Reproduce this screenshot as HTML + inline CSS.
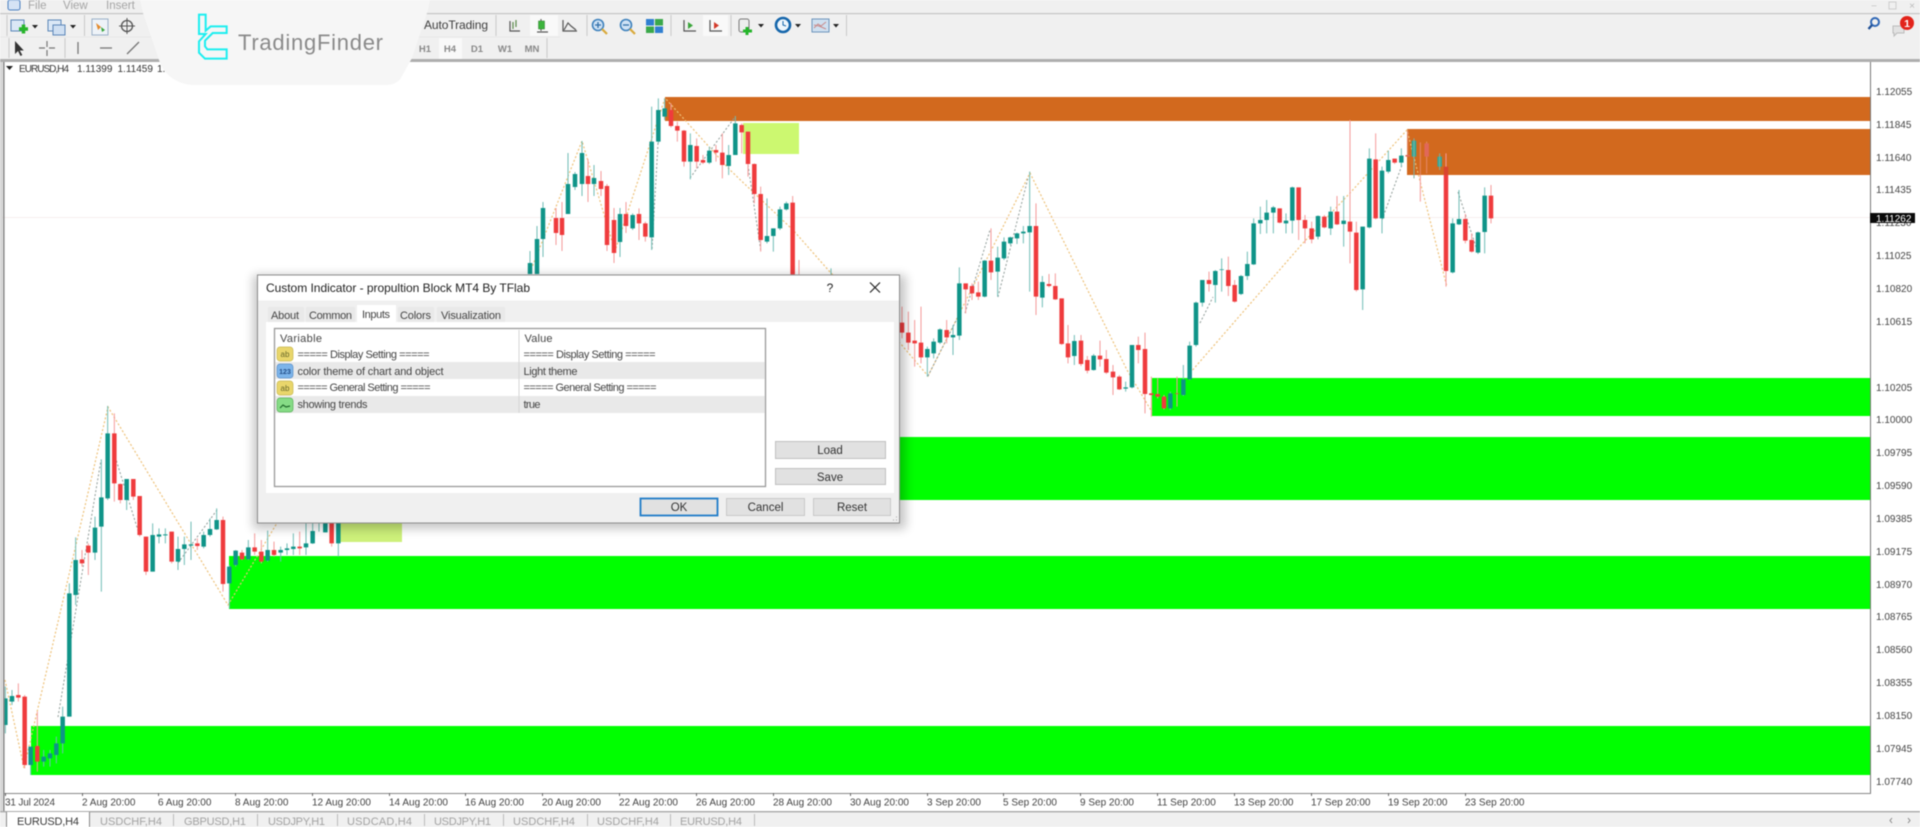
<!DOCTYPE html>
<html><head><meta charset="utf-8"><title>EURUSD,H4</title>
<style>
html,body{margin:0;padding:0;width:1920px;height:827px;overflow:hidden;background:#fff}
svg{display:block;filter:blur(.6px);font-family:"Liberation Sans",sans-serif}
.tw{stroke:#6fbdb5;stroke-width:3;fill:none}.rw{stroke:#f59a9a;stroke-width:3;fill:none}
.tb{stroke:#0f9488;stroke-width:13.5;fill:none}.rb{stroke:#ef3b3d;stroke-width:13.5;fill:none}
.ax{font-size:10px;fill:#444}.tab{font-size:11px;fill:#a2a2a2}.dt{font-size:11px;fill:#3a3a3a}
.bt{font-size:11.5px;fill:#333;text-anchor:middle}.tf{font-size:9.5px;fill:#888;font-weight:bold;text-anchor:middle}
</style></head><body>
<svg width="1920" height="827" viewBox="0 0 1920 827" xmlns="http://www.w3.org/2000/svg">
<defs><filter id="sh" x="-10%" y="-10%" width="120%" height="120%"><feGaussianBlur stdDeviation="5"/></filter></defs>
<rect width="1920" height="827" fill="#fff"/>
<rect x="0" y="217" width="1870" height="1" fill="#f6eeee"/>

<!-- zones -->
<rect x="665" y="97" width="1205" height="24" fill="#d2691e"/>
<rect x="1407" y="129" width="463" height="46" fill="#d2691e"/>
<rect x="743" y="123" width="56" height="31" fill="#ccf870"/>
<rect x="340" y="520" width="62" height="22" fill="#cdf07a"/>
<rect x="31" y="726" width="1839" height="49" fill="#00ff00"/>
<rect x="229" y="556" width="1641" height="53" fill="#00ff00"/>
<rect x="800" y="437" width="1070" height="63" fill="#00ff00"/>
<rect x="1152" y="378" width="718" height="38" fill="#00ff00"/>

<!-- zigzag tan -->
<path fill="none" stroke="#eec27a" stroke-width="1.200" stroke-dasharray="2 2" d="M5 680L24 768L108 407L228 605L277 523L525 285L582 141L615 251L665 98L730 170L793 230L830 272L900 343L928 376L1030 173L1127 370L1152 412M1190 373L1303 243L1350 193L1407 130L1447 287"/>
<path fill="none" stroke="#8f9c98" stroke-width="1" stroke-dasharray="2 2" d="M58 717L101 460M114 453L140 537M178 563L217 510M690 178L735 117M748 165L761 252M658 143L652 250M928 376L960 313M965 313L990 230M998 297L1028 178M1200 323L1213 297M1382 220L1402 165M1458 192L1478 253"/>

<!-- candles group A -->
<g transform="translate(0 400) scale(.33333)">
<path class="tw" d="M16 860V1000M36 870V915M92 1040V1125M131 1050V1100M150 1050V1100M169 1010V1090M188 920V1060M208 550V950M227 412V615M285 350V480M304 178V575M323 18V300M380 237V330M458 370V515M477 385V430M496 385V430M534 410V510M553 410V495M573 365V480M611 395V445M630 355V410M650 325V390M688 495V625M707 450V500M745 420V480M803 392V485M842 440V485M861 430V465M880 400V465M918 370V465M938 370V432M957 370V395M976 370V397M1015 370V470"/>
<path class="rw" d="M55 850V905M74 885V1105M112 935V1115M246 450V500M265 430V525M343 40V305M361 250V310M400 237V300M419 288V410M438 410V525M515 395V490M592 415V450M669 350V575M726 450V480M764 400V465M784 420V490M822 425V470M899 395V465M995 370V440"/>
<path class="tb" d="M16 895V975M36 888V905M92 1040V1095M131 1070V1085M150 1060V1075M169 1030V1065M188 950V1030M208 580V950M227 480V585M285 383V458M304 292V380M323 100V295M380 237V300M458 405V515M477 403V410M496 403V406M534 447V485M553 433V447M573 433V437M611 405V440M630 387V405M650 360V388M688 500V550M707 452V495M745 442V478M803 450V482M842 450V458M861 445V450M880 440V447M918 430V442M938 393V430M976 370V397M1015 370V430"/>
<path class="rb" d="M55 885V893M74 890V1095M112 1038V1085M246 478V490M265 437V458M343 100V250M361 252V300M400 237V290M419 288V405M438 410V515M515 395V485M592 430V438M669 360V552M726 458V478M764 442V455M784 455V485M822 450V465M899 440V445M995 370V430"/>
</g>
<!-- candles group B (left of zoom 8, above dialog) -->
<g>
<path fill="none" stroke="#6fbdb5" stroke-width="1" d="M620 208V257M530 251V274M537 226V274M543 202V257M568 153V213M575 172V190M582 141V196M594 165V196"/>
<path fill="none" stroke="#f59a9a" stroke-width="1" d="M626 202V233M614 208V263M607 184V251M601 171V196M588 159V202M562 202V251M556 208V245"/>
<path fill="none" stroke="#0f9488" stroke-width="4.500" d="M620 214V242M582 153V184M575 174V187M568 184V214M594 178V184M543 208V239M537 239V274M530 263V274"/>
<path fill="none" stroke="#ef3b3d" stroke-width="4.500" d="M626 214V226M614 220V253M607 186V245M601 181V189M588 176V184M562 218V235M556 218V233"/>
</g>
<!-- candles group C -->
<g transform="translate(630 90) scale(.33333)">
<path class="tw" d="M8 370V420M65 50V480M85 25V160M104 25V90M181 130V268M238 170V222M296 165V255M316 78V195M411 325V460M430 415V485M450 350V420M469 335V362M603 535V553"/>
<path class="rw" d="M27 355V450M46 395V455M123 40V112M142 95V155M162 120V230M200 145V235M219 195V222M258 165V215M277 130V265M335 100V190M354 125V260M373 220V340M392 290V485M488 318V553M507 510V553"/>
<path class="tb" d="M8 375V415M65 155V442M85 60V155M104 55V80M181 165V215M238 182V218M296 195V228M316 100V195M411 438V455M430 415V438M450 358V415M469 340V358"/>
<path class="rb" d="M27 372V400M46 400V440M123 60V108M142 108V122M162 122V215M200 168V215M219 210V218M258 180V188M277 188V225M335 105V127M354 125V222M373 222V312M392 312V450M488 338V553"/>
</g>
<!-- candles group D -->
<g transform="translate(900 150) scale(.33333)">
<path class="tw" d="M82 590V680M101 565V625M120 535V582M159 525V615M178 352V570M254 330V442M293 290V440M312 262V330M331 260V285M351 248V282M370 228V280M389 65V425M427 378V472M523 555V645M581 612V662M677 695V725M696 585V715M811 725V780M850 645V738M869 575V690M888 455V590"/>
<path class="rw" d="M6 470V565M25 485V600M44 510V650M63 470V640M140 510V580M197 400V490M216 400V450M235 395V450M273 235V390M408 160V495M447 372V412M466 370V450M485 445V585M504 525V640M543 555V648M562 618V670M600 572V650M619 600V672M639 645V735M658 675V720M715 560V640M735 548V790M754 680V800M773 685V745M792 735V778M831 680V770"/>
<path class="tb" d="M82 597V622M101 575V610M120 538V578M159 555V562M178 400V557M254 332V440M293 323V365M312 275V325M331 262V280M351 250V265M370 245V250M389 228V247M427 396V443M523 573V618M581 617V660M677 712V716M696 585V712M811 730V775M850 688V735M869 587V688M888 458V585"/>
<path class="rb" d="M6 518V548M25 548V578M44 572V580M63 578V622M140 540V562M197 400V418M216 408V430M235 427V440M273 332V367M408 228V440M447 402V408M466 408V448M485 445V582M504 580V622M543 572V642M562 630V662M600 617V628M619 627V668M639 665V682M658 680V718M715 585V600M735 597V732M754 730V735M773 732V740M792 740V775M831 730V732"/>
</g>
<!-- candles group E -->
<g transform="translate(1180 110) scale(.33333)">
<path class="tw" d="M67 510V590M106 480V578M125 445V545M183 495V555M202 425V510M221 325V465M241 290V372M260 270V370M280 288V370M318 310V370M337 230V370M414 316V388M452 290V375M491 258V410M548 350V600M568 115V355M606 170V370M625 122V190M664 115V170M818 325V490M837 240V345M894 365V432M914 232V430"/>
<path class="rw" d="M87 485V545M145 440V558M164 510V578M299 295V340M356 232V390M375 315V400M395 335V400M433 315V355M471 258V345M510 30V460M529 335V545M587 70V328M644 146V162M856 312V400M875 370V428M933 225V340M721 195V275M798 130V530"/>
<path class="tb" d="M67 510V578M106 483V525M125 478V480M183 498V552M202 462V498M221 340V463M241 330V340M260 308V330M280 292V308M318 332V340M337 232V332M414 318V380M452 305V355M491 332V342M548 350V538M568 146V352M606 182V325M625 150V185M664 137V158M818 340V487M837 327V343M894 367V428M914 257V366"/>
<path class="rb" d="M87 510V522M145 480V528M164 525V575M299 295V338M356 232V330M375 330V355M395 355V388M433 320V352M471 305V343M510 335V365M529 368V540M587 148V325M644 146V158M856 327V392M875 390V425M933 257V325M798 195V483"/>
<path fill="none" stroke="#e58a6a" stroke-width="3" d="M683 60V140M721 97V195M740 95V190"/>
<path fill="none" stroke="#e0685a" stroke-width="13.500" d="M683 135V140M740 100V140"/>
<path fill="none" stroke="#2fa89a" stroke-width="13.500" d="M702 92V140M779 140V170"/>
<path fill="none" stroke="#7fb0a0" stroke-width="3" d="M702 85V205M779 130V180"/>
<path fill="none" stroke="#d8452f" stroke-width="13.500" d="M798 170V195"/>
</g>

<!-- axes -->
<rect x="0" y="62" width="2.500" height="750" fill="#d4d4d4"/>
<rect x="3" y="62" width="1.600" height="750" fill="#8a8a8a"/>
<rect x="1870" y="62" width="1" height="731" fill="#777"/>
<rect x="4" y="793" width="1867" height="1" fill="#888"/>
<g fill="#666">
<rect x="5" y="793" width="1" height="3"/><rect x="82" y="793" width="1" height="3"/><rect x="158" y="793" width="1" height="3"/><rect x="235" y="793" width="1" height="3"/><rect x="312" y="793" width="1" height="3"/><rect x="389" y="793" width="1" height="3"/><rect x="465" y="793" width="1" height="3"/><rect x="542" y="793" width="1" height="3"/><rect x="619" y="793" width="1" height="3"/><rect x="696" y="793" width="1" height="3"/><rect x="773" y="793" width="1" height="3"/><rect x="850" y="793" width="1" height="3"/><rect x="927" y="793" width="1" height="3"/><rect x="1003" y="793" width="1" height="3"/><rect x="1080" y="793" width="1" height="3"/><rect x="1157" y="793" width="1" height="3"/><rect x="1234" y="793" width="1" height="3"/><rect x="1311" y="793" width="1" height="3"/><rect x="1388" y="793" width="1" height="3"/><rect x="1465" y="793" width="1" height="3"/>
</g>
<g>
<text x="1876" y="95" class="ax">1.12055</text><text x="1876" y="128" class="ax">1.11845</text><text x="1876" y="161" class="ax">1.11640</text><text x="1876" y="193" class="ax">1.11435</text><text x="1876" y="226" class="ax">1.11230</text><text x="1876" y="259" class="ax">1.11025</text><text x="1876" y="292" class="ax">1.10820</text><text x="1876" y="325" class="ax">1.10615</text><text x="1876" y="391" class="ax">1.10205</text><text x="1876" y="423" class="ax">1.10000</text><text x="1876" y="456" class="ax">1.09795</text><text x="1876" y="489" class="ax">1.09590</text><text x="1876" y="522" class="ax">1.09385</text><text x="1876" y="555" class="ax">1.09175</text><text x="1876" y="588" class="ax">1.08970</text><text x="1876" y="620" class="ax">1.08765</text><text x="1876" y="653" class="ax">1.08560</text><text x="1876" y="686" class="ax">1.08355</text><text x="1876" y="719" class="ax">1.08150</text><text x="1876" y="752" class="ax">1.07945</text><text x="1876" y="785" class="ax">1.07740</text>
</g>
<rect x="1870" y="213" width="45" height="10" fill="#0a0a0a"/>
<text x="1876" y="222" font-size="10" fill="#fff">1.11262</text>
<g>
<text x="5" y="805.500" class="ax" textLength="50">31 Jul 2024</text><text x="82" y="805.500" class="ax">2 Aug 20:00</text><text x="158" y="805.500" class="ax">6 Aug 20:00</text><text x="235" y="805.500" class="ax">8 Aug 20:00</text><text x="312" y="805.500" class="ax">12 Aug 20:00</text><text x="389" y="805.500" class="ax">14 Aug 20:00</text><text x="465" y="805.500" class="ax">16 Aug 20:00</text><text x="542" y="805.500" class="ax">20 Aug 20:00</text><text x="619" y="805.500" class="ax">22 Aug 20:00</text><text x="696" y="805.500" class="ax">26 Aug 20:00</text><text x="773" y="805.500" class="ax">28 Aug 20:00</text><text x="850" y="805.500" class="ax">30 Aug 20:00</text><text x="927" y="805.500" class="ax">3 Sep 20:00</text><text x="1003" y="805.500" class="ax">5 Sep 20:00</text><text x="1080" y="805.500" class="ax">9 Sep 20:00</text><text x="1157" y="805.500" class="ax">11 Sep 20:00</text><text x="1234" y="805.500" class="ax">13 Sep 20:00</text><text x="1311" y="805.500" class="ax">17 Sep 20:00</text><text x="1388" y="805.500" class="ax">19 Sep 20:00</text><text x="1465" y="805.500" class="ax">23 Sep 20:00</text>
</g>

<!-- tab bar -->
<rect x="0" y="811" width="1920" height="16" fill="#f0f0f0"/>
<rect x="0" y="811" width="1920" height="1.400" fill="#aaa"/>
<rect x="6" y="812" width="83" height="15" fill="#fff"/>
<rect x="6" y="812" width="1" height="15" fill="#888"/><rect x="89" y="812" width="1" height="15" fill="#888"/>
<text x="17" y="825" class="dt" textLength="62">EURUSD,H4</text>
<text x="100" y="825" class="tab" textLength="62">USDCHF,H4</text><rect x="173" y="814" width="1" height="12" fill="#bbb"/>
<text x="184" y="825" class="tab" textLength="62">GBPUSD,H1</text><rect x="257" y="814" width="1" height="12" fill="#bbb"/>
<text x="268" y="825" class="tab" textLength="57">USDJPY,H1</text><rect x="337" y="814" width="1" height="12" fill="#bbb"/>
<text x="347" y="825" class="tab" textLength="65">USDCAD,H4</text><rect x="424" y="814" width="1" height="12" fill="#bbb"/>
<text x="434" y="825" class="tab" textLength="57">USDJPY,H1</text><rect x="503" y="814" width="1" height="12" fill="#bbb"/>
<text x="513" y="825" class="tab" textLength="62">USDCHF,H4</text><rect x="587" y="814" width="1" height="12" fill="#bbb"/>
<text x="597" y="825" class="tab" textLength="62">USDCHF,H4</text><rect x="670" y="814" width="1" height="12" fill="#bbb"/>
<text x="680" y="825" class="tab" textLength="62">EURUSD,H4</text><rect x="754" y="814" width="1" height="12" fill="#bbb"/>
<path d="M1892 818l-2 2.500 2 2.500M1908 818l2 2.500-2 2.500" fill="none" stroke="#888"/>

<!-- top chrome -->
<rect x="0" y="0" width="1920" height="60" fill="#f0f0f0"/>
<rect x="0" y="13" width="1920" height="1.200" fill="#c6c6c6"/>
<rect x="0" y="59" width="1920" height="3" fill="#aeaeae"/>
<rect x="8" y="0" width="12" height="10" rx="2" fill="#d5e3f5" stroke="#4a7fc0"/>
<text x="28" y="9" font-size="11.500" fill="#a5a5a5">File</text>
<text x="63" y="9" font-size="11.500" fill="#a5a5a5">View</text>
<text x="106" y="9" font-size="11.500" fill="#a5a5a5">Insert</text>
<text x="1874" y="8" font-size="9" fill="#bbb" text-anchor="middle">–</text>
<rect x="1889" y="2" width="7" height="7" fill="none" stroke="#ccc"/>
<text x="1912" y="9" font-size="10" fill="#bbb" text-anchor="middle">×</text>
<g fill="none" stroke="#c8c8c8">
<path d="M7 15V36M84.500 15V36M9 38V58M65 38V58M496 15V36M587 15V36M671 15V36M731 15V36M846.500 15V36M547 38V58"/>
</g>
<rect x="530" y="15" width="28" height="21" fill="#f9f9f9"/>
<rect x="703" y="15" width="25" height="21" fill="#f9f9f9"/>
<rect x="439" y="38" width="23" height="21" fill="#f9f9f9"/>
<rect x="0" y="36.500" width="560" height="1" fill="#e8e8e8"/>

<!-- left toolbar icons -->
<rect x="11" y="20" width="13" height="11" fill="#dbe8f6" stroke="#5b86b8"/>
<path d="M19 29h9M23.500 24.500v9" stroke="#27b52a" stroke-width="3.500"/>
<path d="M32 25h6l-3 3.500z" fill="#222"/>
<rect x="48" y="20" width="13" height="11" fill="#dbe8f6" stroke="#5b86b8"/>
<rect x="53" y="25" width="12" height="10" fill="#cfdff2" stroke="#5b86b8"/>
<path d="M70 25h6l-3 3.500z" fill="#222"/>
<rect x="92" y="19" width="16" height="16" fill="#eef3f8" stroke="#9ab0c8"/>
<path d="M96 23l5 4-3 3z" fill="#e38a2c"/><path d="M101 27l4 3-3 2z" fill="#37a53a"/>
<circle cx="127" cy="26" r="5.500" fill="none" stroke="#555" stroke-width="1.300"/>
<path d="M127 18v16M119 26h16" stroke="#555"/>
<path d="M15 41v13l3-3 2.500 5 1.800-1-2.500-4.500h4z" fill="#333"/>
<path d="M47 41v6M47 50v6M39 48h6M49 48h6" stroke="#777" stroke-width="1.200"/>
<path d="M78 42v12" stroke="#777" stroke-width="1.300"/>
<path d="M100 48h12" stroke="#777" stroke-width="1.300"/>
<path d="M127 54l12-12" stroke="#777" stroke-width="1.300"/>

<!-- right toolbar -->
<text x="424" y="29" font-size="12" fill="#3e3e3e" textLength="64">AutoTrading</text>
<g fill="none" stroke="#555" stroke-width="1.200">
<path d="M510 21v10h10"/><path d="M537 32h11"/><path d="M563 20v11h14"/><path d="M564 30l4-7 3 3 5 4"/>
<path d="M684 20v11h12"/><path d="M710 20v11h12"/>
<path d="M513 22v7M516 20v7" stroke="#5a8a4a"/>
<path d="M541 19v12" stroke="#666"/>
</g>
<rect x="538.500" y="21" width="6" height="8" fill="#3cb43c" stroke="#2a7a2a" stroke-width=".5"/>
<path d="M688 22v7l5-3.500z" fill="#3aa53a"/><path d="M714 22v7l5-3.500z" fill="#d23a2a"/>
<circle cx="598" cy="25" r="5.500" fill="#cfe2f5" stroke="#3f82bd" stroke-width="1.600"/>
<path d="M595 25h6M598 22v6" stroke="#2f6ea8" stroke-width="1.300"/>
<path d="M602 29l5 5" stroke="#d9a93a" stroke-width="2.200"/>
<circle cx="626" cy="25" r="5.500" fill="#cfe2f5" stroke="#3f82bd" stroke-width="1.600"/>
<path d="M623 25h6" stroke="#2f6ea8" stroke-width="1.300"/>
<path d="M630 29l5 5" stroke="#d9a93a" stroke-width="2.200"/>
<rect x="646" y="19" width="8" height="6.500" fill="#2f7fd0"/><rect x="655" y="19" width="8" height="6.500" fill="#3aa84a"/>
<rect x="646" y="26.500" width="8" height="6.500" fill="#3aa84a"/><rect x="655" y="26.500" width="8" height="6.500" fill="#2f7fd0"/>
<rect x="739" y="19" width="10" height="13" rx="2" fill="#eee" stroke="#777"/>
<path d="M747 27v8M743 31h9" stroke="#25b52a" stroke-width="3"/>
<path d="M758 24h6l-3 3.500z" fill="#222"/>
<circle cx="783" cy="25" r="7" fill="#eef6fc" stroke="#1566ab" stroke-width="2.600"/>
<path d="M783 21v4l3 1" stroke="#1566ab" fill="none"/>
<path d="M795 24h6l-3 3.500z" fill="#222"/>
<rect x="812" y="19" width="17" height="13" fill="#cfe0f0" stroke="#6d94bb"/>
<path d="M814 28l4-4 3 2 5-4M814 25l5 1 7 3" stroke="#c98a8a" fill="none"/>
<path d="M833 24h6l-3 3.500z" fill="#222"/>
<text x="425" y="52" class="tf">H1</text><text x="450" y="52" class="tf">H4</text><text x="477" y="52" class="tf">D1</text><text x="505" y="52" class="tf">W1</text><text x="532" y="52" class="tf">MN</text>

<!-- search and chat -->
<circle cx="1875" cy="22" r="4" fill="none" stroke="#2f67b5" stroke-width="2"/>
<path d="M1872 25l-3.500 4" stroke="#1f4f95" stroke-width="2.400"/>
<path d="M1893 26h11v7h-7l-3 3v-3h-1z" fill="#e2e2e2" stroke="#bbb"/>
<circle cx="1907" cy="23" r="7" fill="#e2231a"/>
<text x="1907" y="27" font-size="10.500" font-weight="bold" fill="#fff" text-anchor="middle">1</text>

<!-- chart header -->
<path d="M6 66h7l-3.500 4z" fill="#222"/>
<text x="19" y="72" font-size="10" fill="#333" textLength="50">EURUSD,H4</text>
<text x="77" y="72" font-size="10" fill="#333">1.11399</text>
<text x="117.500" y="72" font-size="10" fill="#333">1.11459</text>
<text x="157" y="72" font-size="10" fill="#333">1.11...</text>

<!-- logo panel -->
<path d="M140 0L143 13L159 60Q163 72 172 78Q182 85 195 85H385Q398 85 402 76L412 58L428 10L430 0Z" fill="#f6f6f6"/>
<g transform="translate(190 8) scale(.33333)">
<path d="M27 20H47V68L62 55H110V75H68L45 98V115L52 124H110V152H45L27 134V100L47 78H27Z" fill="none" stroke="#1ceef0" stroke-width="6"/>
</g>
<text x="238" y="50" font-size="22" fill="#8a8a8a" textLength="145">TradingFinder</text>

<!-- dialog -->
<rect x="253" y="275" width="653" height="254" fill="#000" opacity=".22" filter="url(#sh)"/>
<rect x="257.500" y="275" width="642" height="248" fill="#f0f0f0" stroke="#8c8c8c"/>
<rect x="258" y="275.500" width="641" height="25" fill="#fff"/>
<text x="266" y="292" font-size="12" fill="#222" textLength="264">Custom Indicator - propultion Block MT4 By TFlab</text>
<text x="830" y="292" font-size="12" fill="#222" text-anchor="middle">?</text>
<path d="M870 282.500l10 10M880 282.500l-10 10" stroke="#222" stroke-width="1.200"/>
<rect x="268" y="307" width="36" height="15" fill="#e9e9e9"/><rect x="306" y="307" width="49" height="15" fill="#e9e9e9"/>
<rect x="398" y="307" width="36" height="15" fill="#e9e9e9"/><rect x="437" y="307" width="68" height="15" fill="#e9e9e9"/>
<rect x="266" y="322" width="628" height="171" fill="#fff"/>
<rect x="357" y="305" width="39" height="18" fill="#fff"/>
<text x="271" y="319" font-size="11" fill="#444" textLength="28">About</text>
<text x="309" y="319" font-size="11" fill="#444" textLength="43">Common</text>
<text x="362" y="318" font-size="11" fill="#444" textLength="28">Inputs</text>
<text x="400" y="319" font-size="11" fill="#444" textLength="31">Colors</text>
<text x="441" y="319" font-size="11" fill="#444" textLength="60">Visualization</text>
<rect x="274.500" y="328.500" width="491" height="158" fill="#fff" stroke="#9a9a9a" stroke-width="1.300"/>
<rect x="275.500" y="362" width="489" height="17" fill="#e9e9e9"/>
<rect x="275.500" y="396" width="489" height="17" fill="#e9e9e9"/>
<path d="M519 330V413" stroke="#d6d6d6"/>
<text x="280" y="342" font-size="11" fill="#444" textLength="42">Variable</text>
<text x="524.500" y="342" font-size="11" fill="#444" textLength="28">Value</text>

<rect x="277" y="347" width="16" height="14" rx="3" fill="#e9d66b" stroke="#c8b850" stroke-width=".7"/>
<text x="285" y="357" font-size="8" fill="#6a6a2a" text-anchor="middle">ab</text>
<rect x="277" y="364" width="16" height="14" rx="3" fill="#7cb4ea" stroke="#5a8fc8" stroke-width=".7"/>
<text x="285" y="374" font-size="7" font-weight="bold" fill="#24508a" text-anchor="middle">123</text>
<rect x="277" y="381" width="16" height="14" rx="3" fill="#e9d66b" stroke="#c8b850" stroke-width=".7"/>
<text x="285" y="391" font-size="8" fill="#6a6a2a" text-anchor="middle">ab</text>
<rect x="277" y="398" width="16" height="14" rx="3" fill="#86dc86" stroke="#56b056" stroke-width=".7"/>
<path d="M280 408l3-3 3 2 4-1" fill="none" stroke="#1f6a2a" stroke-width="1.200"/>

<text x="297.500" y="358" font-size="11" fill="#444" textLength="132">===== Display Setting =====</text>
<text x="297.500" y="375" font-size="11" fill="#444" textLength="146">color theme of chart and object</text>
<text x="297.500" y="391" font-size="11" fill="#444" textLength="133">===== General Setting =====</text>
<text x="297.500" y="408" font-size="11" fill="#444" textLength="70">showing trends</text>
<text x="523.500" y="358" font-size="11" fill="#444" textLength="132">===== Display Setting =====</text>
<text x="523.500" y="375" font-size="11" fill="#444" textLength="54">Light theme</text>
<text x="523.500" y="391" font-size="11" fill="#444" textLength="133">===== General Setting =====</text>
<text x="523.500" y="408" font-size="11" fill="#444" textLength="17">true</text>

<rect x="775.500" y="441.500" width="110" height="17" fill="#e1e1e1" stroke="#c0c0c0"/>
<text x="830" y="454" class="bt">Load</text>
<rect x="775.500" y="468.500" width="110" height="16" fill="#e1e1e1" stroke="#c0c0c0"/>
<text x="830" y="481" class="bt">Save</text>
<rect x="640.500" y="498.500" width="77" height="17" fill="#e1e1e1" stroke="#1f7cc8" stroke-width="1.800"/>
<text x="679" y="511" class="bt">OK</text>
<rect x="726.500" y="498.500" width="78" height="17" fill="#e1e1e1" stroke="#c8c8c8"/>
<text x="765.500" y="511" class="bt">Cancel</text>
<rect x="813.500" y="498.500" width="77" height="17" fill="#e1e1e1" stroke="#c8c8c8"/>
<text x="852" y="511" class="bt">Reset</text>
<path d="M893 520h1M896 520h1M896 517h1" stroke="#aaa"/>
</svg>
</body></html>
